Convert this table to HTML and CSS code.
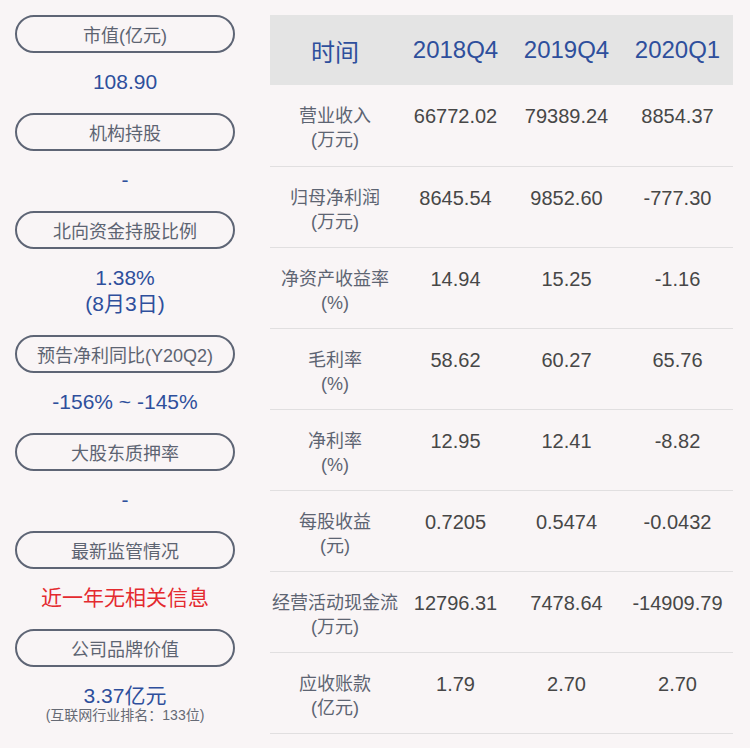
FILE: index.html
```html
<!DOCTYPE html>
<html lang="zh">
<head>
<meta charset="utf-8">
<link rel="stylesheet" href="styles.css">
</head>
<body>
<div class="page">
  <div class="side">
    <div class="pill">市值(亿元)</div>
    <div class="val">108.90</div>
    <div class="pill">机构持股</div>
    <div class="val">-</div>
    <div class="pill">北向资金持股比例</div>
    <div class="val two">1.38%<br>(8月3日)</div>
    <div class="pill">预告净利同比(Y20Q2)</div>
    <div class="val">-156% ~ -145%</div>
    <div class="pill">大股东质押率</div>
    <div class="val">-</div>
    <div class="pill">最新监管情况</div>
    <div class="val red">近一年无相关信息</div>
    <div class="pill">公司品牌价值</div>
    <div class="val last">3.37亿元<div class="sub">(互联网行业排名：133位)</div></div>
  </div>
  <table class="tbl">
    <thead>
      <tr><th class="lab">时间</th><th>2018Q4</th><th>2019Q4</th><th>2020Q1</th></tr>
    </thead>
    <tbody>
      <tr><td class="lab">营业收入<br>(万元)</td><td>66772.02</td><td>79389.24</td><td>8854.37</td></tr>
      <tr><td class="lab">归母净利润<br>(万元)</td><td>8645.54</td><td>9852.60</td><td>-777.30</td></tr>
      <tr><td class="lab">净资产收益率<br>(%)</td><td>14.94</td><td>15.25</td><td>-1.16</td></tr>
      <tr><td class="lab">毛利率<br>(%)</td><td>58.62</td><td>60.27</td><td>65.76</td></tr>
      <tr><td class="lab">净利率<br>(%)</td><td>12.95</td><td>12.41</td><td>-8.82</td></tr>
      <tr><td class="lab">每股收益<br>(元)</td><td>0.7205</td><td>0.5474</td><td>-0.0432</td></tr>
      <tr><td class="lab">经营活动现金流<br>(万元)</td><td>12796.31</td><td>7478.64</td><td>-14909.79</td></tr>
      <tr><td class="lab">应收账款<br>(亿元)</td><td>1.79</td><td>2.70</td><td>2.70</td></tr>
    </tbody>
  </table>
</div>
</body>
</html>
```

FILE: styles.css
```css
html, body {
  margin: 0;
  padding: 0;
  background: #f9f5f6;
}
body {
  font-family: "Liberation Sans", "Noto Sans CJK SC", sans-serif;
  width: 750px;
  height: 748px;
  overflow: hidden;
}
.page {
  display: flex;
  align-items: flex-start;
  gap: 35px;
  padding: 15px 0 0 15px;
}
.side {
  width: 220px;
  display: flex;
  flex-direction: column;
}
.pill {
  box-sizing: border-box;
  flex: none;
  height: 38px;
  border: 2px solid #5e6575;
  border-radius: 19px;
  display: flex;
  align-items: center;
  justify-content: center;
  font-size: 18px;
  color: #5d6472;
}
.val {
  box-sizing: border-box;
  flex: none;
  height: 60px;
  padding-top: 16px;
  line-height: 26px;
  font-size: 21px;
  color: #2e4f9c;
  text-align: center;
  overflow: visible;
}
.val.two {
  height: 86px;
}
.val.red {
  color: #e42a2f;
}
.val.last {
  padding-top: 17px;
  height: auto;
  line-height: 24px;
}
.sub {
  font-size: 14px;
  line-height: 14px;
  color: #666a74;
}
.tbl {
  width: 463px;
  border-collapse: collapse;
  table-layout: fixed;
}
.tbl th {
  height: 70px;
  padding: 0;
  background: #e4e4e4;
  font-weight: normal;
  font-size: 24px;
  color: #2e4f9c;
  text-align: center;
  width: 111px;
}
.tbl th.lab {
  width: 130px;
}
.tbl td {
  height: 81px;
  box-sizing: border-box;
  padding: 19px 0 0;
  vertical-align: top;
  text-align: center;
  font-size: 20px;
  line-height: 24px;
  color: #474747;
  border-bottom: 1px solid #e1dfe0;
}
.tbl td.lab {
  font-size: 18px;
  color: #5d6472;
}
```
